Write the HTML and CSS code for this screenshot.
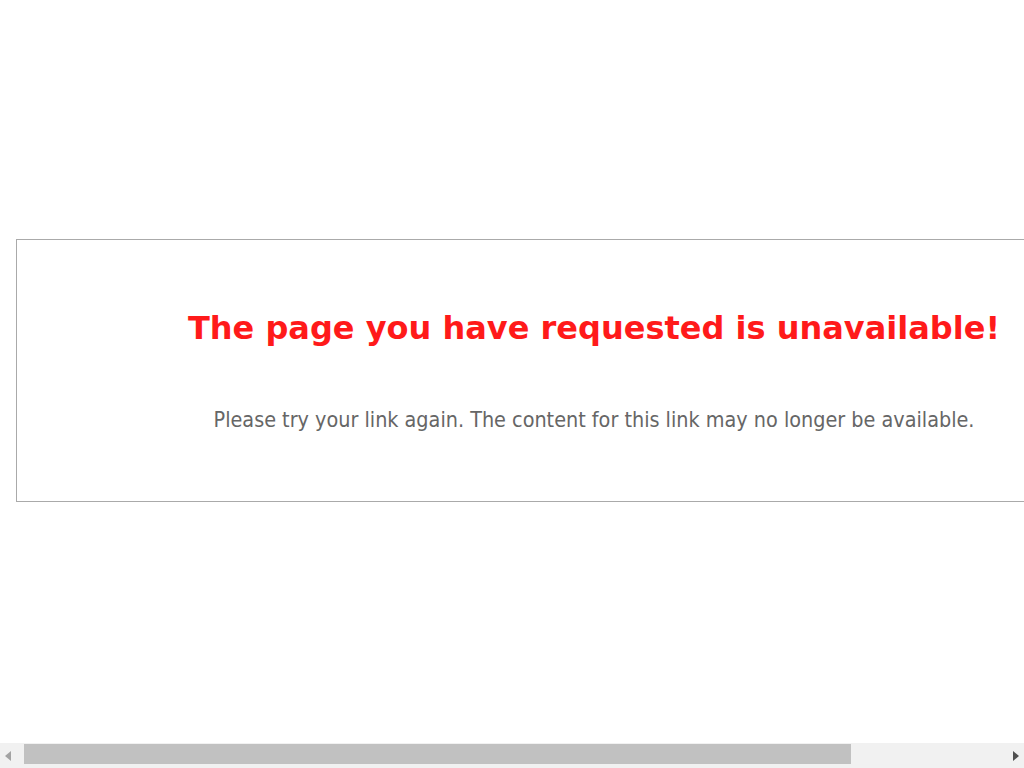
FILE: index.html
```html
<!DOCTYPE html>
<html lang="en">
<head>
<meta charset="utf-8">
<title>Page unavailable</title>
<link rel="stylesheet" href="styles.css">
</head>
<body>
<div class="frame">
  <div class="box">
    <h1 class="title">The page you have requested is unavailable!</h1>
    <p class="message">Please try your link again. The content for this link may no longer be available.</p>
  </div>
</div>
<div class="hscroll" aria-hidden="true">
  <div class="arrow arrow-left"></div>
  <div class="track"><div class="thumb"></div></div>
  <div class="arrow arrow-right"></div>
</div>
</body>
</html>
```

FILE: styles.css
```css
html, body {
  margin: 0;
  padding: 0;
  background: #ffffff;
  overflow: hidden;
}
.frame {
  padding: 239px 16px 0 16px;
  width: 1156px;
}
.box {
  box-sizing: border-box;
  width: 1156px;
  height: 263px;
  border: 1px solid #aaaaaa;
  text-align: center;
  font-family: "DejaVu Sans", sans-serif;
  padding-top: 68px;
}
.title {
  margin: 0;
  font-size: 32px;
  font-weight: bold;
  color: #ff1a1a;
  line-height: 40px;
}
.message {
  margin: 60px 0 0 0;
  font-family: "DejaVu Sans Condensed", "DejaVu Sans", sans-serif;
  font-stretch: condensed;
  font-size: 21.4px;
  color: #666666;
  line-height: 24px;
}
.hscroll {
  position: fixed;
  left: 0;
  right: 0;
  bottom: 0;
  height: 25px;
  background: #f1f1f1;
  display: flex;
  align-items: center;
}
.arrow {
  width: 24px;
  height: 25px;
  display: flex;
  align-items: center;
  justify-content: center;
  flex: none;
}
.arrow-left::before {
  content: "";
  border-style: solid;
  border-width: 5px 6px 5px 0;
  border-color: transparent #a3a3a3 transparent transparent;
  margin-left: -8px;
}
.arrow-right::before {
  content: "";
  border-style: solid;
  border-width: 5px 0 5px 6px;
  border-color: transparent transparent transparent #505050;
  margin-right: -8px;
}
.track {
  flex: 1;
  height: 20px;
  margin-top: -3px;
}
.thumb {
  width: 827px;
  height: 20px;
  background: #c1c1c1;
}
```
